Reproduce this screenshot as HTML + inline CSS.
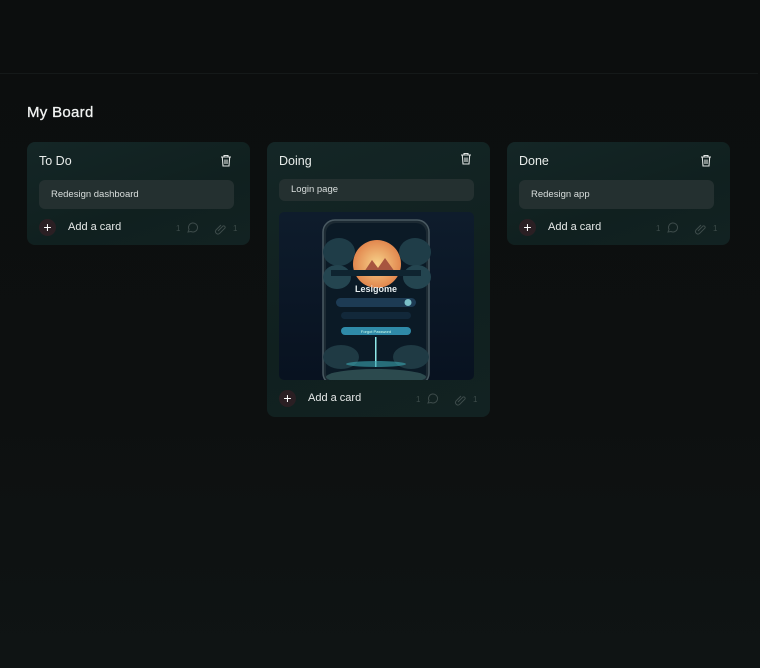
<!DOCTYPE html>
<html><head><meta charset="utf-8"><style>
*{margin:0;padding:0;box-sizing:border-box}
body{width:760px;height:668px;overflow:hidden;background:linear-gradient(180deg,#0c0e0e 0%,#0d1010 60%,#0f1414 100%);font-family:"Liberation Sans",sans-serif;color:#e6e9e8;position:relative}
.line{position:absolute;left:0;top:73px;width:758px;height:1px;background:#151919}
h1{position:absolute;left:27px;top:104px;font-size:15px;font-weight:normal;letter-spacing:.3px;color:#f2f4f3;-webkit-text-stroke:.3px #f2f4f3}
.col{position:absolute;top:142px;width:223px;border-radius:8px;background:linear-gradient(160deg,#142626 0%,#10201f 60%,#122222 100%)}
.t{position:absolute;left:12px;top:12px;font-size:12.5px;color:#e8ecea}
.trash{position:absolute;right:18px;top:12px}
.card{position:absolute;left:12px;width:195px;border-radius:6px;background:#243030;font-size:9.5px;color:#d9dedd;padding-left:12px}
.add{position:absolute;left:12px;width:200px;height:18px}
.plus{position:absolute;left:0;top:0;width:17px;height:17px;border-radius:50%;background:#2a1f23;color:#fff;font-size:14px;line-height:17px;text-align:center}
.al{position:absolute;left:29px;top:2px;font-size:11px;color:#e6e9e8}
.meta{position:absolute;left:137px;top:2px;font-size:8px;color:#3e4c4b}
</style></head><body>
<div class="line"></div>
<h1>My Board</h1>

<div class="col" style="left:27px;height:103px">
<div class="t">To Do</div>
<svg class="trash" width="12" height="13" viewBox="0 0 12 13" fill="none" stroke="#dfe3e2" stroke-width="1.1"><path d="M1 3h10M4 3V1.5h4V3M2.3 3l.7 9h6l.7-9M5 5.5v4.5M7 5.5v4.5"/></svg>
<div class="card" style="top:38px;height:29px;line-height:29px">Redesign dashboard</div>
<div class="add" style="top:77px"><div class="plus">+</div><div class="al">Add a card</div>
<svg class="meta" width="75" height="14" viewBox="0 0 75 14" fill="none" stroke="#3e4c4b" stroke-width="1"><text x="0" y="10" font-size="8" fill="#3e4c4b" stroke="none" font-family="Liberation Sans">1</text><path d="M12 11l1-2.5a4.5 4.5 0 1 1 2 2z"/><path d="M42 10l5-5a1.5 1.5 0 0 1 2 2l-5.5 5.5a2.5 2.5 0 0 1-3.5-3.5l5-5"/><text x="57" y="10" font-size="8" fill="#3e4c4b" stroke="none" font-family="Liberation Sans">1</text></svg></div>
</div>

<div class="col" style="left:267px;height:275px">
<div class="t">Doing</div>
<svg class="trash" width="12" height="13" viewBox="0 0 12 13" fill="none" stroke="#dfe3e2" stroke-width="1.1" style="top:10px"><path d="M1 3h10M4 3V1.5h4V3M2.3 3l.7 9h6l.7-9M5 5.5v4.5M7 5.5v4.5"/></svg>
<div class="card" style="top:37px;height:22px;line-height:22px">Login page</div>
<svg style="position:absolute;left:12px;top:70px" width="195" height="168" viewBox="0 0 195 168">
<defs><linearGradient id="bg" x1="0" y1="0" x2="0" y2="1"><stop offset="0" stop-color="#0e1c2c"/><stop offset="1" stop-color="#081220"/></linearGradient>
<radialGradient id="sun" cx=".5" cy=".5" r=".5"><stop offset="0" stop-color="#f7d28a"/><stop offset="1" stop-color="#e2874e"/></radialGradient>
<clipPath id="cp"><rect width="195" height="168" rx="5"/></clipPath></defs>
<g clip-path="url(#cp)">
<rect width="195" height="168" fill="url(#bg)"/>
<rect x="44" y="8" width="106" height="165" rx="12" fill="#1c2a33" stroke="#4a5a62" stroke-width="1.5"/>
<rect x="47" y="11" width="100" height="160" rx="10" fill="#0b1a26"/>
<circle cx="98" cy="52" r="24" fill="url(#sun)"/>
<path d="M85 60l8-12 6 8 7-10 10 14z" fill="#a7553f"/>
<ellipse cx="60" cy="40" rx="16" ry="14" fill="#1f3d48"/><ellipse cx="136" cy="40" rx="16" ry="14" fill="#1f3d48"/>
<ellipse cx="58" cy="65" rx="14" ry="12" fill="#244550"/><ellipse cx="138" cy="65" rx="14" ry="12" fill="#244550"/>
<rect x="52" y="58" width="90" height="6" fill="#0f2430"/>
<text x="97" y="80" text-anchor="middle" font-size="9" font-weight="bold" fill="#e8eef0" font-family="Liberation Sans">Lesigome</text>
<rect x="57" y="86" width="80" height="9" rx="4.5" fill="#1d3b54"/>
<circle cx="129" cy="90.5" r="3.5" fill="#7bc0c8"/>
<rect x="62" y="100" width="70" height="7" rx="3.5" fill="#12283a"/>
<rect x="62" y="115" width="70" height="8" rx="4" fill="#2f8aa8"/>
<text x="97" y="121" text-anchor="middle" font-size="4" fill="#cfe" font-family="Liberation Sans">Forgot Password</text>
<ellipse cx="62" cy="145" rx="18" ry="12" fill="#1f3a44"/><ellipse cx="132" cy="145" rx="18" ry="12" fill="#1f3a44"/>
<rect x="96" y="125" width="1.5" height="30" fill="#8ee8e8"/>
<ellipse cx="97" cy="152" rx="30" ry="3" fill="#3aa5b0" opacity=".6"/>
<ellipse cx="97" cy="165" rx="50" ry="8" fill="#2c4a4e"/>
</g>
</svg>
<div class="add" style="top:248px"><div class="plus">+</div><div class="al">Add a card</div>
<svg class="meta" width="75" height="14" viewBox="0 0 75 14" fill="none" stroke="#3e4c4b" stroke-width="1"><text x="0" y="10" font-size="8" fill="#3e4c4b" stroke="none" font-family="Liberation Sans">1</text><path d="M12 11l1-2.5a4.5 4.5 0 1 1 2 2z"/><path d="M42 10l5-5a1.5 1.5 0 0 1 2 2l-5.5 5.5a2.5 2.5 0 0 1-3.5-3.5l5-5"/><text x="57" y="10" font-size="8" fill="#3e4c4b" stroke="none" font-family="Liberation Sans">1</text></svg></div>
</div>

<div class="col" style="left:507px;height:103px">
<div class="t">Done</div>
<svg class="trash" width="12" height="13" viewBox="0 0 12 13" fill="none" stroke="#dfe3e2" stroke-width="1.1"><path d="M1 3h10M4 3V1.5h4V3M2.3 3l.7 9h6l.7-9M5 5.5v4.5M7 5.5v4.5"/></svg>
<div class="card" style="top:38px;height:29px;line-height:29px">Redesign app</div>
<div class="add" style="top:77px"><div class="plus">+</div><div class="al">Add a card</div>
<svg class="meta" width="75" height="14" viewBox="0 0 75 14" fill="none" stroke="#3e4c4b" stroke-width="1"><text x="0" y="10" font-size="8" fill="#3e4c4b" stroke="none" font-family="Liberation Sans">1</text><path d="M12 11l1-2.5a4.5 4.5 0 1 1 2 2z"/><path d="M42 10l5-5a1.5 1.5 0 0 1 2 2l-5.5 5.5a2.5 2.5 0 0 1-3.5-3.5l5-5"/><text x="57" y="10" font-size="8" fill="#3e4c4b" stroke="none" font-family="Liberation Sans">1</text></svg></div>
</div>
</body></html>
